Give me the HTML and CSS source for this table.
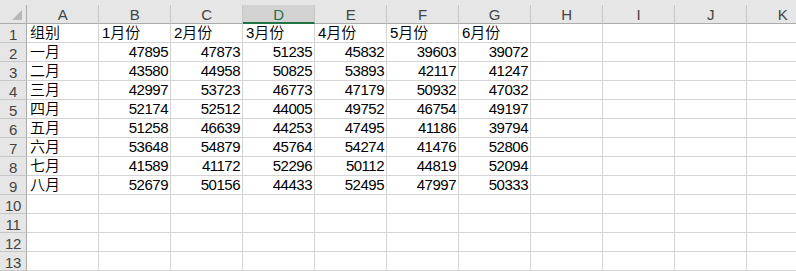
FILE: index.html
```html
<!DOCTYPE html>
<html lang="zh-CN">
<head>
<meta charset="utf-8">
<title>组别月份数据</title>
<link rel="stylesheet" href="styles.css">
</head>
<body>
<div class="sheet">
  <div class="topstrip"></div>
  <div class="grid">
    <div class="hd corner"><span class="tri"></span></div>
    <div class="hd col">A</div>
    <div class="hd col">B</div>
    <div class="hd col">C</div>
    <div class="hd col sel">D</div>
    <div class="hd col">E</div>
    <div class="hd col">F</div>
    <div class="hd col">G</div>
    <div class="hd col">H</div>
    <div class="hd col">I</div>
    <div class="hd col">J</div>
    <div class="hd col">K</div>

    <div class="hd row">1</div>
    <div class="c t">组别</div><div class="c t">1月份</div><div class="c t">2月份</div><div class="c t">3月份</div><div class="c t">4月份</div><div class="c t">5月份</div><div class="c t">6月份</div><div class="c"></div><div class="c"></div><div class="c"></div><div class="c"></div>

    <div class="hd row">2</div>
    <div class="c t">一月</div><div class="c n">47895</div><div class="c n">47873</div><div class="c n">51235</div><div class="c n">45832</div><div class="c n">39603</div><div class="c n">39072</div><div class="c"></div><div class="c"></div><div class="c"></div><div class="c"></div>

    <div class="hd row">3</div>
    <div class="c t">二月</div><div class="c n">43580</div><div class="c n">44958</div><div class="c n">50825</div><div class="c n">53893</div><div class="c n">42117</div><div class="c n">41247</div><div class="c"></div><div class="c"></div><div class="c"></div><div class="c"></div>

    <div class="hd row">4</div>
    <div class="c t">三月</div><div class="c n">42997</div><div class="c n">53723</div><div class="c n">46773</div><div class="c n">47179</div><div class="c n">50932</div><div class="c n">47032</div><div class="c"></div><div class="c"></div><div class="c"></div><div class="c"></div>

    <div class="hd row">5</div>
    <div class="c t">四月</div><div class="c n">52174</div><div class="c n">52512</div><div class="c n">44005</div><div class="c n">49752</div><div class="c n">46754</div><div class="c n">49197</div><div class="c"></div><div class="c"></div><div class="c"></div><div class="c"></div>

    <div class="hd row">6</div>
    <div class="c t">五月</div><div class="c n">51258</div><div class="c n">46639</div><div class="c n">44253</div><div class="c n">47495</div><div class="c n">41186</div><div class="c n">39794</div><div class="c"></div><div class="c"></div><div class="c"></div><div class="c"></div>

    <div class="hd row">7</div>
    <div class="c t">六月</div><div class="c n">53648</div><div class="c n">54879</div><div class="c n">45764</div><div class="c n">54274</div><div class="c n">41476</div><div class="c n">52806</div><div class="c"></div><div class="c"></div><div class="c"></div><div class="c"></div>

    <div class="hd row">8</div>
    <div class="c t">七月</div><div class="c n">41589</div><div class="c n">41172</div><div class="c n">52296</div><div class="c n">50112</div><div class="c n">44819</div><div class="c n">52094</div><div class="c"></div><div class="c"></div><div class="c"></div><div class="c"></div>

    <div class="hd row">9</div>
    <div class="c t">八月</div><div class="c n">52679</div><div class="c n">50156</div><div class="c n">44433</div><div class="c n">52495</div><div class="c n">47997</div><div class="c n">50333</div><div class="c"></div><div class="c"></div><div class="c"></div><div class="c"></div>

    <div class="hd row">10</div>
    <div class="c"></div><div class="c"></div><div class="c"></div><div class="c"></div><div class="c"></div><div class="c"></div><div class="c"></div><div class="c"></div><div class="c"></div><div class="c"></div><div class="c"></div>

    <div class="hd row">11</div>
    <div class="c"></div><div class="c"></div><div class="c"></div><div class="c"></div><div class="c"></div><div class="c"></div><div class="c"></div><div class="c"></div><div class="c"></div><div class="c"></div><div class="c"></div>

    <div class="hd row">12</div>
    <div class="c"></div><div class="c"></div><div class="c"></div><div class="c"></div><div class="c"></div><div class="c"></div><div class="c"></div><div class="c"></div><div class="c"></div><div class="c"></div><div class="c"></div>

    <div class="hd row">13</div>
    <div class="c"></div><div class="c"></div><div class="c"></div><div class="c"></div><div class="c"></div><div class="c"></div><div class="c"></div><div class="c"></div><div class="c"></div><div class="c"></div><div class="c"></div>
  </div>
</div>
</body>
</html>
```

FILE: styles.css
```css
html, body {
  margin: 0;
  padding: 0;
  background: #ffffff;
  overflow: hidden;
}

.sheet {
  width: 796px;
  height: 271px;
  overflow: hidden;
  font-family: "Liberation Sans", "Noto Sans CJK SC", sans-serif;
  font-size: 15px;
  font-weight: 350;
  color: #000;
}

.topstrip {
  height: 5px;
  background: #e6e6e6;
}

.grid {
  display: grid;
  grid-template-columns: 27px repeat(11, 72px);
  grid-auto-rows: 19px;
  width: max-content;
}

/* headers */
.hd {
  box-sizing: border-box;
  background: #e6e6e6;
  color: #444;
  display: flex;
  align-items: center;
  justify-content: center;
  font-size: 15px;
  line-height: 1;
  letter-spacing: -0.3px;
}

.col {
  border-right: 1px solid #c6c6c6;
  border-bottom: 1px solid #ababab;
  padding-top: 1px;
}

.col.sel {
  background: #d2d2d2;
  color: #217346;
  border-bottom: 2px solid #217346;
}

.corner {
  position: relative;
  border-right: 1px solid #ababab;
  border-bottom: 1px solid #ababab;
}

.corner .tri {
  position: absolute;
  right: 4px;
  bottom: 3px;
  width: 0;
  height: 0;
  border-left: 10px solid transparent;
  border-bottom: 10px solid #b9b9b9;
}

.row {
  border-right: 1px solid #ababab;
  border-bottom: 1px solid #c6c6c6;
  padding-top: 2px;
}

/* cells */
.c {
  box-sizing: border-box;
  border-right: 1px solid #d4d4d4;
  border-bottom: 1px solid #d4d4d4;
  display: flex;
  align-items: flex-end;
  padding: 0 2px 1px 3px;
  white-space: nowrap;
  line-height: 16px;
}

.c.n {
  justify-content: flex-end;
  letter-spacing: -0.5px;
  padding-right: 2px;
}
```
